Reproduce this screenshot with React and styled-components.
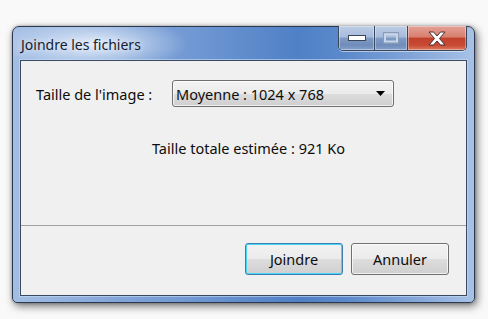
import React from "react";
import styled, { createGlobalStyle } from "styled-components";

const Global = createGlobalStyle`
  html, body { margin: 0; padding: 0; }
  body {
    background: #f9f9f9;
    font-family: "Noto Sans", "Open Sans", sans-serif;
    width: 488px;
    height: 319px;
    overflow: hidden;
  }
`;

const Page = styled.div`
  padding: 26px 0 0 12px;
`;

const Window = styled.div`
  box-sizing: border-box;
  width: 463px;
  height: 277px;
  border: 1px solid #2b3a50;
  border-radius: 7px 7px 5px 5px;
  background:
    radial-gradient(ellipse 95px 28px at 80px 17px, rgba(235, 242, 252, 0.9), rgba(235, 242, 252, 0) 100%),
    linear-gradient(to right, #a3bee4 0%, #86a8da 20%, #6f97d2 40%, #4f80c6 62%, #5c89cb 72%, #86a8da 88%, #a8c2e5 100%);
  box-shadow: 2px 3px 9px rgba(0, 0, 0, 0.55), 0 0 3px rgba(0, 0, 0, 0.3);
  display: flex;
  flex-direction: column;
  padding: 0 7px 6px 7px;
`;

const TitleBar = styled.div`
  height: 33px;
  display: flex;
  justify-content: space-between;
  align-items: flex-start;
`;

const Title = styled.div`
  margin-top: 8px;
  margin-left: 1px;
  font-size: 14px;
  color: #15202e;
  text-shadow: 0 0 6px rgba(255, 255, 255, 0.9);
`;

const Caption = styled.div`
  display: flex;
  margin-top: -1px;
  height: 24px;
  border: 1px solid #3a475b;
  border-top: none;
  border-radius: 0 0 5px 5px;
  overflow: hidden;
  box-shadow: 0 1px 0 rgba(255, 255, 255, 0.5);
`;

const CapBtn = styled.div`
  width: ${(p) => p.$w}px;
  height: 100%;
  display: flex;
  align-items: center;
  justify-content: center;
  border-left: ${(p) => (p.$first ? "none" : "1px solid #3a475b")};
  box-shadow: inset 0 0 0 1px rgba(255, 255, 255, 0.35);
  background: ${(p) =>
    p.$close
      ? "linear-gradient(to bottom, #e5a197 0%, #d8806f 45%, #c2412c 52%, #c84a33 80%, #dd7a61 100%)"
      : "linear-gradient(to bottom, #bccde6 0%, #a7bcdc 45%, #7f9ac3 52%, #6f8cba 80%, #86a3cf 100%)"};
`;

const Field = styled.div`
  flex: 1;
  border: 1px solid #3a4a60;
  background: #f0f0f0;
  display: flex;
  flex-direction: column;
  box-shadow: 0 0 0 1px rgba(200, 220, 245, 0.6);
`;

const Main = styled.div`
  flex: 1;
  padding: 19px 16px 0 15px;
  display: flex;
  flex-direction: column;
`;

const Row = styled.div`
  display: flex;
  align-items: center;
`;

const Label = styled.div`
  width: 136px;
  font-size: 14.5px;
  color: #0d0d0d;
`;

const Select = styled.div`
  box-sizing: border-box;
  width: 222px;
  height: 27px;
  border: 1px solid #707070;
  border-radius: 3px;
  background: linear-gradient(to bottom, #f3f3f3 0%, #ebebeb 50%, #dddddd 51%, #cfcfcf 100%);
  box-shadow: inset 0 0 0 1px rgba(255, 255, 255, 0.7);
  display: flex;
  align-items: center;
  justify-content: space-between;
  padding: 0 8px 0 3px;
  font-size: 14.5px;
  color: #0d0d0d;
`;

const Estimate = styled.div`
  margin-top: 31px;
  padding-left: 11px;
  text-align: center;
  font-size: 14.5px;
  color: #0d0d0d;
`;

const Footer = styled.div`
  height: 70px;
  border-top: 1px solid #a0a0a0;
  display: flex;
  justify-content: flex-end;
  align-items: flex-start;
  padding: 17px 17px 0 0;
  box-sizing: border-box;
  gap: 8px;
`;

const Button = styled.div`
  box-sizing: border-box;
  width: 98px;
  height: 32px;
  border: 1px solid ${(p) => (p.$default ? "#3c7fb1" : "#707070")};
  border-radius: 3px;
  background: linear-gradient(to bottom, #f2f2f2 0%, #ebebeb 50%, #dddddd 51%, #cfcfcf 100%);
  box-shadow: inset 0 0 0 1px ${(p) => (p.$default ? "#48d5f7" : "rgba(255,255,255,0.7)")};
  display: flex;
  align-items: center;
  justify-content: center;
  font-size: 14.5px;
  color: #0d0d0d;
`;

export default function App() {
  return (
    <>
      <Global />
      <Page>
        <Window>
          <TitleBar>
            <Title>Joindre les fichiers</Title>
            <Caption>
              <CapBtn $w={35} $first>
                <svg width="18" height="6" viewBox="0 0 18 6">
                  <rect x="0.5" y="0.5" width="17" height="5" fill="#fff" stroke="#3b4556" />
                </svg>
              </CapBtn>
              <CapBtn $w={32}>
                <svg width="16" height="12" viewBox="0 0 16 12">
                  <rect x="0.5" y="0.5" width="15" height="11" fill="none" stroke="#8a9bb6" />
                  <rect x="2" y="2.5" width="12" height="7" fill="none" stroke="#c9d5e8" strokeWidth="2" />
                </svg>
              </CapBtn>
              <CapBtn $w={58} $close>
                <svg width="18" height="15" viewBox="0 0 18 15">
                  <path
                    d="M1 1 H5.5 L9 5 L12.5 1 H17 L11.5 7.5 L17 14 H12.5 L9 10 L5.5 14 H1 L6.5 7.5 Z"
                    fill="#fff"
                    stroke="#4a3034"
                    strokeWidth="1"
                    strokeLinejoin="round"
                  />
                </svg>
              </CapBtn>
            </Caption>
          </TitleBar>
          <Field>
            <Main>
              <Row>
                <Label>Taille de l'image :</Label>
                <Select>
                  <span>Moyenne : 1024 x 768</span>
                  <svg width="9" height="5" viewBox="0 0 9 5">
                    <path d="M0 0 H9 L4.5 5 Z" fill="#000" />
                  </svg>
                </Select>
              </Row>
              <Estimate>Taille totale estimée : 921 Ko</Estimate>
            </Main>
            <Footer>
              <Button $default>Joindre</Button>
              <Button>Annuler</Button>
            </Footer>
          </Field>
        </Window>
      </Page>
    </>
  );
}
